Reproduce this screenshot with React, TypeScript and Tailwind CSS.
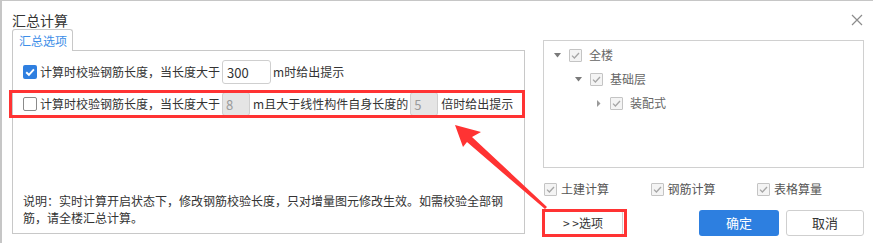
import React from 'react';

const font = "font-['Noto_Sans_CJK_SC','Noto_Sans',sans-serif]";

function BlueCheck() {
  return (
    <span className="w-[14px] h-[14px] rounded-[2px] bg-[#2f7fe0] flex items-center justify-center shrink-0">
      <svg width="12" height="12" viewBox="0 0 12 12">
        <path d="M2.2 6.2 L4.9 8.8 L9.9 3.4" fill="none" stroke="#fff" strokeWidth="1.9" />
      </svg>
    </span>
  );
}

function EmptyCheck() {
  return <span className="w-[14px] h-[14px] rounded-[2px] border border-[#8a8a8a] bg-white shrink-0" />;
}

// disabled, checked (gray)
function GrayCheck() {
  return (
    <span className="w-[13px] h-[13px] rounded-[1px] border border-[#c4c4c4] bg-[#f4f4f4] flex items-center justify-center shrink-0">
      <svg width="11" height="11" viewBox="0 0 11 11">
        <path d="M2 5.6 L4.4 8 L9 3" fill="none" stroke="#a6a6a6" strokeWidth="1.3" />
      </svg>
    </span>
  );
}

function Caret({ open }: { open: boolean }) {
  return open ? (
    <svg width="7" height="5" viewBox="0 0 7 5" className="shrink-0">
      <path d="M0 0 H7 L3.5 4.5 Z" fill="#7a7a7a" />
    </svg>
  ) : (
    <svg width="7" height="7" viewBox="0 0 7 7" className="shrink-0">
      <path d="M2 0 V7 L5.5 3.5 Z" fill="#9a9a9a" />
    </svg>
  );
}

const tree = [
  { label: '全楼', level: 0, open: true },
  { label: '基础层', level: 1, open: true },
  { label: '装配式', level: 2, open: false },
];

const levelPad = ['pl-[10px]', 'pl-[31px]', 'pl-[51px]'];

export default function App() {
  return (
    <div className={`relative w-[873px] h-[243px] overflow-hidden ${font}`}>
      <div className="w-full h-full bg-white border-l-2 border-t border-[#c6c6c6] pl-[10px]">
        {/* title */}
        <div className="h-[28px] pt-[9px] pr-[10px] flex items-start justify-between">
          <span className="text-[14px] leading-[20px] text-[#333]">汇总计算</span>
          <svg width="12" height="12" viewBox="0 0 12 12" className="mt-[4px]">
            <path d="M1 1 L11 11 M11 1 L1 11" stroke="#8c8c8c" strokeWidth="1.2" />
          </svg>
        </div>

        <div className="flex items-start gap-[18px]">
          {/* left */}
          <div className="w-[513px] flex flex-col">
            <div className="relative z-10 -mb-px h-[22px] w-[61px] border border-b-0 border-[#c8c8c8] rounded-t-[3px] bg-white pl-[6px] flex items-center text-[12px] text-[#3d8ee8]">
              汇总选项
            </div>
            <div className="h-[184px] border border-[#c8c8c8] pt-[9px] pl-[10px] pr-[10px] pb-[7px] flex flex-col text-[12px] text-[#333]">
              <div className="h-[24px] flex items-center">
                <BlueCheck />
                <span className="ml-[3px]">计算时校验钢筋长度，当长度大于</span>
                <input
                  readOnly
                  value="300"
                  className="ml-[2px] w-[49px] h-[24px] border border-[#cfcfcf] rounded-[3px] bg-white pl-[4px] text-[13px] text-[#333] outline-none"
                />
                <span className="ml-[2px]">m时给出提示</span>
              </div>
              <div className="mt-[8px] h-[24px] flex items-center">
                <EmptyCheck />
                <span className="ml-[3px]">计算时校验钢筋长度，当长度大于</span>
                <input
                  disabled
                  value="8"
                  className="ml-[2px] w-[28px] h-[24px] border border-[#cfcfcf] rounded-[3px] bg-[#e5e5e5] pl-[3px] text-[13px] text-[#9a9a9a] outline-none"
                />
                <span className="ml-[3px]">m且大于线性构件自身长度的</span>
                <input
                  disabled
                  value="5"
                  className="ml-[2px] w-[28px] h-[24px] border border-[#cfcfcf] rounded-[3px] bg-[#e5e5e5] pl-[3px] text-[13px] text-[#9a9a9a] outline-none"
                />
                <span className="ml-[3px]">倍时给出提示</span>
              </div>
              <p className="mt-auto leading-[17px]">
                说明：实时计算开启状态下，修改钢筋校验长度，只对增量图元修改生效。如需校验全部钢筋，请全楼汇总计算。
              </p>
            </div>
          </div>

          {/* right */}
          <div className="w-[321px] pt-[11px] flex flex-col">
            <div className="h-[128px] border border-[#d0d0d0] pt-[2px]">
              {tree.map((t) => (
                <div key={t.label} className={`h-[24px] flex items-center ${levelPad[t.level]}`}>
                  <span className="w-[7px] flex justify-center">
                    <Caret open={t.open} />
                  </span>
                  <span className="ml-[8px]">
                    <GrayCheck />
                  </span>
                  <span className="ml-[7px] text-[12px] text-[#666]">{t.label}</span>
                </div>
              ))}
            </div>

            <div className="mt-[11px] h-[20px] flex items-center pl-px text-[12px] text-[#555]">
              {['土建计算', '钢筋计算', '表格算量'].map((l) => (
                <div key={l} className="w-[106.5px] flex items-center gap-[4px]">
                  <GrayCheck />
                  <span>{l}</span>
                </div>
              ))}
            </div>

            <div className="mt-[11px] flex items-center text-[13px]">
              <button className="w-[80px] h-[26px] border border-[#cfcfcf] rounded-[3px] bg-white text-[#333] text-[12px]">
                &gt; &gt;选项
              </button>
              <button className="ml-auto w-[80px] h-[26px] rounded-[3px] bg-[#2d7fe0] text-white">确定</button>
              <button className="ml-[7px] w-[78px] h-[26px] border border-[#cfcfcf] rounded-[3px] bg-white text-[#333]">
                取消
              </button>
            </div>
          </div>
        </div>
      </div>

      {/* annotations */}
      <div className="absolute left-[9px] top-[90px] w-[516px] h-[28px] border-[3px] border-[#ff3333] pointer-events-none" />
      <div className="absolute left-[542px] top-[209px] w-[85px] h-[28px] border-[3px] border-[#ff3333] pointer-events-none" />
      <svg className="absolute left-0 top-0 pointer-events-none" width="873" height="243" viewBox="0 0 873 243">
        <polygon
          points="455,125 481,132 472,137 547,207 545,209 467,142 463,147"
          fill="#ff3333"
        />
      </svg>
    </div>
  );
}
